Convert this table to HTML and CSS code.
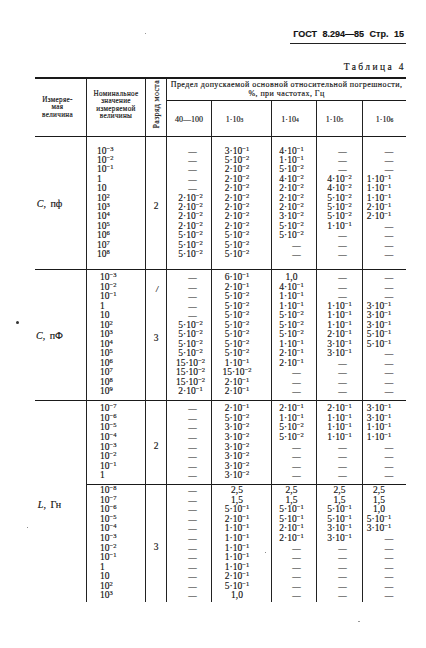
FILE: index.html
```html
<!DOCTYPE html>
<html lang="ru">
<head>
<meta charset="utf-8">
<title>ГОСТ 8.294—85 Стр. 15</title>
<link rel="stylesheet" href="styles.css">
</head>
<body>
<div class="page">
  <div class="runhead"><div class="runhead-text">ГОСТ 8.294—85 Стр. 15</div></div>
  <div class="caption">Таблица 4</div>

  <div class="tbl">
    <!-- header -->
    <div class="cell hd h-q bb">Измеряе-<br>мая<br>величина</div>
    <div class="cell hd h-n bb">Номинальное<br>значение<br>измеряемой<br>величины</div>
    <div class="cell hd h-r bb"><span class="vert">Разряд моста</span></div>
    <div class="hd h-top bb">Предел допускаемой основной относительной погрешности,<br>%, при частотах, Гц</div>
    <div class="cell hd h-f f4 bb">40—100</div>
    <div class="cell hd h-f f5 bb">1·10<sup>3</sup></div>
    <div class="cell hd h-f f6 bb">1·10<sup>4</sup></div>
    <div class="cell hd h-f f7 bb">1·10<sup>5</sup></div>
    <div class="hd h-f f8 bb">1·10<sup>6</sup></div>

    <!-- section 1 : C, пф -->
    <div class="cell lbl bb"><span><i>C</i>, пф</span></div>
    <div class="cell col c2 s1 bb first">
      <div>10<sup>−3</sup></div><div>10<sup>−2</sup></div><div>10<sup>−1</sup></div><div>1</div><div>10</div><div>10<sup>2</sup></div><div>10<sup>3</sup></div><div>10<sup>4</sup></div><div>10<sup>5</sup></div><div>10<sup>6</sup></div><div>10<sup>7</sup></div><div>10<sup>8</sup></div>
    </div>
    <div class="cell rng bb"><span class="rng-n">2</span></div>
    <div class="cell col c4 s1 bb">
      <div class="d">—</div><div class="d">—</div><div class="d">—</div><div class="d">—</div><div class="d">—</div><div>2·10<sup>−2</sup></div><div>2·10<sup>−2</sup></div><div>2·10<sup>−2</sup></div><div>2·10<sup>−2</sup></div><div>5·10<sup>−2</sup></div><div>5·10<sup>−2</sup></div><div>5·10<sup>−2</sup></div>
    </div>
    <div class="cell col c5 s1 bb">
      <div>3·10<sup>−1</sup></div><div>5·10<sup>−2</sup></div><div>2·10<sup>−2</sup></div><div>2·10<sup>−2</sup></div><div>2·10<sup>−2</sup></div><div>2·10<sup>−2</sup></div><div>2·10<sup>−2</sup></div><div>2·10<sup>−2</sup></div><div>2·10<sup>−2</sup></div><div>5·10<sup>−2</sup></div><div>5·10<sup>−2</sup></div><div>5·10<sup>−2</sup></div>
    </div>
    <div class="cell col c6 s1 bb">
      <div>4·10<sup>−1</sup></div><div>1·10<sup>−1</sup></div><div>5·10<sup>−2</sup></div><div>4·10<sup>−2</sup></div><div>2·10<sup>−2</sup></div><div>2·10<sup>−2</sup></div><div>2·10<sup>−2</sup></div><div>3·10<sup>−2</sup></div><div>5·10<sup>−2</sup></div><div>5·10<sup>−2</sup></div><div class="d">—</div><div class="d">—</div>
    </div>
    <div class="cell col c7 s1 bb">
      <div class="d">—</div><div class="d">—</div><div class="d">—</div><div>4·10<sup>−2</sup></div><div>4·10<sup>−2</sup></div><div>5·10<sup>−2</sup></div><div>5·10<sup>−2</sup></div><div>5·10<sup>−2</sup></div><div>1·10<sup>−1</sup></div><div class="d">—</div><div class="d">—</div><div class="d">—</div>
    </div>
    <div class="col c8 s1 bb">
      <div class="d">—</div><div class="d">—</div><div class="d">—</div><div>1·10<sup>−1</sup></div><div>1·10<sup>−1</sup></div><div>1·10<sup>−1</sup></div><div>2·10<sup>−1</sup></div><div>2·10<sup>−1</sup></div><div class="d">—</div><div class="d">—</div><div class="d">—</div><div class="d">—</div>
    </div>

    <!-- section 2 : C, пФ -->
    <div class="cell lbl bb"><span><i>C</i>, пФ</span></div>
    <div class="cell col c2 s2 bb">
      <div>10<sup>−3</sup></div><div>10<sup>−2</sup></div><div>10<sup>−1</sup></div><div>1</div><div>10</div><div>10<sup>2</sup></div><div>10<sup>3</sup></div><div>10<sup>4</sup></div><div>10<sup>5</sup></div><div>10<sup>6</sup></div><div>10<sup>7</sup></div><div>10<sup>8</sup></div><div>10<sup>9</sup></div>
    </div>
    <div class="cell rng bb"><span class="mark">/</span><span class="rng-n">3</span></div>
    <div class="cell col c4 s2 bb">
      <div class="d">—</div><div class="d">—</div><div class="d">—</div><div class="d">—</div><div class="d">—</div><div>5·10<sup>−2</sup></div><div>5·10<sup>−2</sup></div><div>5·10<sup>−2</sup></div><div>5·10<sup>−2</sup></div><div>15·10<sup>−2</sup></div><div>15·10<sup>−2</sup></div><div>15·10<sup>−2</sup></div><div>2·10<sup>−1</sup></div>
    </div>
    <div class="cell col c5 s2 bb">
      <div>6·10<sup>−1</sup></div><div>2·10<sup>−1</sup></div><div>5·10<sup>−2</sup></div><div>5·10<sup>−2</sup></div><div>5·10<sup>−2</sup></div><div>5·10<sup>−2</sup></div><div>5·10<sup>−2</sup></div><div>5·10<sup>−2</sup></div><div>5·10<sup>−2</sup></div><div>1·10<sup>−1</sup></div><div>15·10<sup>−2</sup></div><div>2·10<sup>−1</sup></div><div>2·10<sup>−1</sup></div>
    </div>
    <div class="cell col c6 s2 bb">
      <div>1,0</div><div>4·10<sup>−1</sup></div><div>1·10<sup>−1</sup></div><div>1·10<sup>−1</sup></div><div>5·10<sup>−2</sup></div><div>5·10<sup>−2</sup></div><div>5·10<sup>−2</sup></div><div>1·10<sup>−1</sup></div><div>2·10<sup>−1</sup></div><div>2·10<sup>−1</sup></div><div class="d">—</div><div class="d">—</div><div class="d">—</div>
    </div>
    <div class="cell col c7 s2 bb">
      <div class="d">—</div><div class="d">—</div><div class="d">—</div><div>1·10<sup>−1</sup></div><div>1·10<sup>−1</sup></div><div>1·10<sup>−1</sup></div><div>2·10<sup>−1</sup></div><div>3·10<sup>−1</sup></div><div>3·10<sup>−1</sup></div><div class="d">—</div><div class="d">—</div><div class="d">—</div><div class="d">—</div>
    </div>
    <div class="col c8 s2 bb">
      <div class="d">—</div><div class="d">—</div><div class="d">—</div><div>3·10<sup>−1</sup></div><div>3·10<sup>−1</sup></div><div>3·10<sup>−1</sup></div><div>5·10<sup>−1</sup></div><div>5·10<sup>−1</sup></div><div class="d">—</div><div class="d">—</div><div class="d">—</div><div class="d">—</div><div class="d">—</div>
    </div>

    <!-- section 3 : L, Гн (bridge 2) -->
    <div class="cell lbl lbl-l"><span><i>L</i>, Гн</span></div>
    <div class="cell col c2 s3 bb">
      <div>10<sup>−7</sup></div><div>10<sup>−6</sup></div><div>10<sup>−5</sup></div><div>10<sup>−4</sup></div><div>10<sup>−3</sup></div><div>10<sup>−2</sup></div><div>10<sup>−1</sup></div><div>1</div>
    </div>
    <div class="cell rng bb"><span class="rng-n">2</span></div>
    <div class="cell col c4 s3 bb">
      <div class="d">—</div><div class="d">—</div><div class="d">—</div><div class="d">—</div><div class="d">—</div><div class="d">—</div><div class="d">—</div><div class="d">—</div>
    </div>
    <div class="cell col c5 s3 bb">
      <div>2·10<sup>−1</sup></div><div>5·10<sup>−2</sup></div><div>3·10<sup>−2</sup></div><div>3·10<sup>−2</sup></div><div>3·10<sup>−2</sup></div><div>3·10<sup>−2</sup></div><div>3·10<sup>−2</sup></div><div>3·10<sup>−2</sup></div>
    </div>
    <div class="cell col c6 s3 bb">
      <div>2·10<sup>−1</sup></div><div>1·10<sup>−1</sup></div><div>5·10<sup>−2</sup></div><div>5·10<sup>−2</sup></div><div class="d">—</div><div class="d">—</div><div class="d">—</div><div class="d">—</div>
    </div>
    <div class="cell col c7 s3 bb">
      <div>2·10<sup>−1</sup></div><div>1·10<sup>−1</sup></div><div>1·10<sup>−1</sup></div><div>1·10<sup>−1</sup></div><div class="d">—</div><div class="d">—</div><div class="d">—</div><div class="d">—</div>
    </div>
    <div class="col c8 s3 bb">
      <div>3·10<sup>−1</sup></div><div>3·10<sup>−1</sup></div><div>1·10<sup>−1</sup></div><div>1·10<sup>−1</sup></div><div class="d">—</div><div class="d">—</div><div class="d">—</div><div class="d">—</div>
    </div>

    <!-- section 4 : L, Гн (bridge 3) -->
    <div class="cell col c2 s4">
      <div>10<sup>−8</sup></div><div>10<sup>−7</sup></div><div>10<sup>−6</sup></div><div>10<sup>−5</sup></div><div>10<sup>−4</sup></div><div>10<sup>−3</sup></div><div>10<sup>−2</sup></div><div>10<sup>−1</sup></div><div>1</div><div>10</div><div>10<sup>2</sup></div><div>10<sup>3</sup></div>
    </div>
    <div class="cell rng"><span class="rng-n">3</span></div>
    <div class="cell col c4 s4">
      <div class="d">—</div><div class="d">—</div><div class="d">—</div><div class="d">—</div><div class="d">—</div><div class="d">—</div><div class="d">—</div><div class="d">—</div><div class="d">—</div><div class="d">—</div><div class="d">—</div><div class="d">—</div>
    </div>
    <div class="cell col c5 s4">
      <div>2,5</div><div>1,5</div><div>5·10<sup>−1</sup></div><div>2·10<sup>−1</sup></div><div>1·10<sup>−1</sup></div><div>1·10<sup>−1</sup></div><div>1·10<sup>−1</sup></div><div>1·10<sup>−1</sup></div><div>1·10<sup>−1</sup></div><div>2·10<sup>−1</sup></div><div>5·10<sup>−1</sup></div><div>1,0</div>
    </div>
    <div class="cell col c6 s4">
      <div>2,5</div><div>1,5</div><div>5·10<sup>−1</sup></div><div>5·10<sup>−1</sup></div><div>2·10<sup>−1</sup></div><div>2·10<sup>−1</sup></div><div class="d">—</div><div class="d">—</div><div class="d">—</div><div class="d">—</div><div class="d">—</div><div class="d">—</div>
    </div>
    <div class="cell col c7 s4">
      <div>2,5</div><div>1,5</div><div>5·10<sup>−1</sup></div><div>5·10<sup>−1</sup></div><div>3·10<sup>−1</sup></div><div>3·10<sup>−1</sup></div><div class="d">—</div><div class="d">—</div><div class="d">—</div><div class="d">—</div><div class="d">—</div><div class="d">—</div>
    </div>
    <div class="col c8 s4">
      <div>2,5</div><div>1,5</div><div>1,0</div><div>5·10<sup>−1</sup></div><div>3·10<sup>−1</sup></div><div class="d">—</div><div class="d">—</div><div class="d">—</div><div class="d">—</div><div class="d">—</div><div class="d">—</div><div class="d">—</div>
    </div>
  </div>

  <span class="speck sp1"></span>
  <span class="speck sp2"></span>
  <span class="speck sp3"></span>
  <span class="speck sp4"></span>
  <span class="speck sp5"></span>
</div>
</body>
</html>
```

FILE: styles.css
```css
* { box-sizing: border-box; }

body {
  margin: 0;
  background: #ffffff;
  color: #111111;
  font-family: "Liberation Serif", "Times New Roman", serif;
}

.page {
  position: relative;
  width: 426px;
  height: 648px;
  padding: 0 20px 0 35px;
  overflow: hidden;
  -webkit-text-stroke: 0.15px #111;
}

/* running head */
.runhead {
  display: flex;
  justify-content: flex-end;
  padding-top: 29px;
}
.runhead-text {
  width: 116px;
  padding: 0 2px 4px 0;
  border-bottom: 1px solid #222;
  text-align: right;
  font-family: "Liberation Sans", Arial, sans-serif;
  font-weight: bold;
  font-size: 9px;
  line-height: 10px;
  word-spacing: 3px;
  white-space: nowrap;
}

.caption {
  margin-top: 18px;
  text-align: right;
  font-size: 9.5px;
  line-height: 10px;
  letter-spacing: 2.4px;
}

/* table grid */
.tbl {
  display: grid;
  grid-template-columns: 52px 59px 21px 45px 60px 45px 46px 43px;
  grid-template-rows: 22px 36px 133px 131px 84px 117px;
  margin-top: 5px;
  border-top: 2px solid #1a1a1a;
}

.cell { border-right: 1px solid #222; }
.bb { border-bottom: 1px solid #1a1a1a; }

sup {
  font-size: 6.5px;
  line-height: 0;
  vertical-align: 3.5px;
}

/* header cells */
.hd {
  display: flex;
  align-items: center;
  justify-content: center;
  text-align: center;
  font-size: 7.2px;
  letter-spacing: 0.3px;
}
.h-q, .h-n, .h-r { grid-row: 1 / span 2; }
.h-q {
  line-height: 7.4px;
  padding-right: 6px;
  padding-top: 1px;
}
.h-n {
  line-height: 7.4px;
  padding-bottom: 4px;
}
.h-r {
  align-items: flex-end;
  padding-bottom: 8px;
  overflow: hidden;
}
.vert {
  writing-mode: vertical-rl;
  transform: rotate(180deg);
  font-size: 8px;
  letter-spacing: 0.3px;
  white-space: nowrap;
  line-height: 9px;
}
.h-top {
  grid-column: 4 / span 5;
  font-size: 8px;
  line-height: 8.5px;
  letter-spacing: 0.45px;
  white-space: nowrap;
}
.h-f {
  font-size: 8px;
  letter-spacing: 0;
  padding-top: 2px;
}
.h-f sup { font-size: 5.5px; vertical-align: 3px; }
.f5 { padding-right: 14px; }
.f6 { padding-right: 8px; }
.f7 { padding-right: 10px; }

/* label column */
.lbl {
  display: flex;
  align-items: center;
  justify-content: center;
  padding-right: 22px;
  font-size: 10px;
  word-spacing: 2px;
  white-space: nowrap;
}
.lbl-l {
  grid-row: 5 / span 2;
  padding-top: 6px;
}

/* bridge rank column */
.rng {
  position: relative;
  display: flex;
  align-items: center;
  justify-content: center;
  font-size: 9.5px;
}
.rng-n { padding-top: 6px; }
.mark {
  position: absolute;
  left: 10px;
  top: 15px;
  font-size: 8px;
  font-style: italic;
}

/* data columns */
.col {
  display: flex;
  flex-direction: column;
  justify-content: center;
  font-size: 9.5px;
  white-space: nowrap;
}
.s1 { line-height: 9.4px; }
.s2 { line-height: 9.5px; }
.s3 { line-height: 9.6px; }
.s4 { line-height: 9.6px; }

.c2 { padding-left: 13px; text-align: left; }
.c2.first { padding-left: 10px; }

.c4, .c5, .c6, .c7, .c8 { text-align: center; }
.c4 { padding-left: 3px; }
.c4 .d { padding-left: 4px; }
.c5 { padding-right: 9px; }
.c6 { padding-right: 5px; }
.c6 .d { padding-left: 10px; }
.c7 .d { padding-left: 6px; }
.c8 { padding-right: 11px; }
.c8 .d { padding-left: 20px; }

.d { font-size: 8.5px; }

/* scan specks */
.speck {
  position: absolute;
  background: #333;
  border-radius: 50%;
}
.sp1 { left: 16px; top: 321px; width: 3px; height: 3px; }
.sp2 { left: 145px; top: 33px; width: 1px; height: 1px; background: #777; }
.sp3 { left: 27px; top: 527px; width: 1px; height: 1px; background: #666; }
.sp4 { left: 265px; top: 552px; width: 1px; height: 1px; background: #666; }
.sp5 { left: 358px; top: 621px; width: 2px; height: 1px; background: #777; }
```
